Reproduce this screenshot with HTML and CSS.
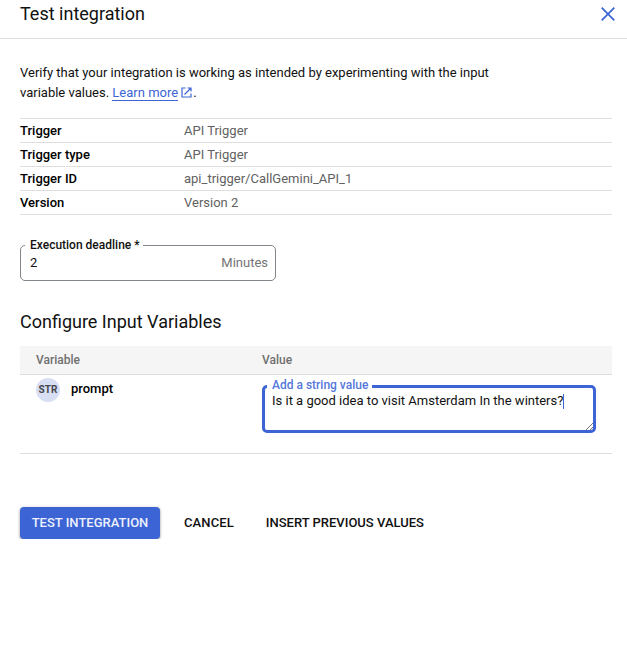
FILE: index.html
```html
<!DOCTYPE html>
<html lang="en">
<head>
<meta charset="utf-8">
<title>Test integration</title>
<link rel="stylesheet" href="styles.css">
</head>
<body>
<header class="panel-header">
  <h1 class="title">Test integration</h1>
  <svg class="close" viewBox="0 0 14 14" role="img" aria-label="Close"><path d="M.7.7l12.6 12.6M13.3.7L.7 13.3"/></svg>
</header>
<main class="content">
  <p class="intro">Verify that your integration is working as intended by experimenting with the input<br>variable values. <a class="link" href="#">Learn more</a><svg class="external" viewBox="0 0 11 11"><path d="M4.5 1H1v9h9V6.5M6.5 1H10v3.5M10 1L3.5 7.5"/></svg>.</p>
  <dl class="details">
    <div class="detail"><dt>Trigger</dt><dd>API Trigger</dd></div>
    <div class="detail"><dt>Trigger type</dt><dd>API Trigger</dd></div>
    <div class="detail"><dt>Trigger ID</dt><dd>api_trigger/CallGemini_API_1</dd></div>
    <div class="detail"><dt>Version</dt><dd>Version 2</dd></div>
  </dl>
  <fieldset class="field deadline">
    <legend>Execution deadline *</legend>
    <div class="deadline-row"><span>2</span><span class="unit">Minutes</span></div>
  </fieldset>
  <h2 class="section-title">Configure Input Variables</h2>
  <div class="row table-head"><span>Variable</span><span>Value</span></div>
  <div class="row table-row">
    <div class="variable"><span class="badge">STR</span><span class="name">prompt</span></div>
    <fieldset class="field value-field">
      <legend>Add a string value</legend>
      <div class="value-text"><span>Is it a good idea to visit Amsterdam In the winters?</span><i class="caret"></i></div>
      <svg class="grip" viewBox="0 0 7 7"><path d="M0 7L7 0M4 7l3-3"/></svg>
    </fieldset>
  </div>
  <div class="actions">
    <button class="btn primary">TEST INTEGRATION</button>
    <button class="btn cancel">CANCEL</button>
    <button class="btn">INSERT PREVIOUS VALUES</button>
  </div>
</main>
</body>
</html>
```
FILE: styles.css
```css
* { box-sizing: border-box; }
body { margin: 0; background: #fff; color: #111; font: 13px/20px Roboto, sans-serif; }
h1, h2, p, dl, dd { margin: 0; }
.panel-header { height: 39px; padding: 0 12px 0 20px; display: flex; justify-content: space-between; align-items: flex-start; border-bottom: 1px solid #dedede; }
.title { font-size: 18px; line-height: 28px; font-weight: 400; }
.close { width: 14px; height: 14px; margin-top: 7px; fill: none; stroke: #3c64d4; stroke-width: 1.7; }
.content { padding: 24px 15px 0 20px; }
.link { color: #3c64d4; text-decoration: none; border-bottom: 1px solid #3c64d4; }
.external { width: 11px; height: 11px; margin: 0 1px 0 3px; vertical-align: -1px; fill: none; stroke: #3c64d4; stroke-width: 1.2; }
.details { margin-top: 15px; border-top: 1px solid #dedede; }
.detail { display: grid; grid-template-columns: 164px 1fr; height: 24px; line-height: 24px; border-bottom: 1px solid #dedede; }
.detail dt { font-weight: 500; color: #000; }
.detail dd { color: #616161; }
.field { margin: 0; min-width: 0; }
.field legend { font-size: 12px; font-weight: 500; line-height: 14px; height: 14px; }
.deadline { width: 256px; height: 43px; margin-top: 23px; padding: 0 7px 0 9px; border: 1px solid #80868b; border-radius: 5px; }
.deadline legend { margin-left: -5px; padding: 0 3px 0 5px; }
.deadline-row { display: flex; justify-content: space-between; padding-top: 1px; line-height: 20px; }
.unit { color: #757575; }
.section-title { margin-top: 27px; font-size: 18px; line-height: 28px; font-weight: 400; }
.row { display: grid; grid-template-columns: 226px 334px; padding-left: 16px; border-bottom: 1px solid #dedede; }
.table-head { height: 29px; margin-top: 10px; line-height: 28px; background: #f5f5f5; color: #707070; font-size: 12px; font-weight: 500; }
.table-row { height: 79px; align-items: start; }
.variable { display: flex; padding-top: 3px; }
.badge { width: 24px; height: 24px; border-radius: 50%; background: #d8dff5; color: #45464b; font-size: 10px; font-weight: 700; line-height: 24px; text-align: center; }
.name { margin-left: 11px; line-height: 22px; font-weight: 500; color: #000; }
.value-field { position: relative; height: 55px; margin-top: 3px; padding: 0 7px; border: 3px solid #3c64d4; border-radius: 5px; }
.value-field legend { height: 17px; margin-left: -5px; padding: 0 4px 0 5px; color: #5578db; }
.value-text { display: flex; align-items: center; height: 12px; line-height: 12px; color: #111; }
.caret { width: 1px; height: 15px; background: #3c64d4; }
.grip { position: absolute; right: 0; bottom: 0; width: 7px; height: 7px; fill: none; stroke: #555; stroke-width: .8; }
.actions { display: flex; margin-top: 53px; }
.btn { height: 32px; padding: 0; border: 0; background: none; color: #111; font: 500 13px/32px Roboto, sans-serif; white-space: nowrap; }
.primary { width: 140px; border-radius: 4px; background: #3c64d4; color: #edf1fd; box-shadow: 0 1px 3px rgba(0,0,0,.45); }
.cancel { margin: 0 32px 0 24px; letter-spacing: .1px; }
```
